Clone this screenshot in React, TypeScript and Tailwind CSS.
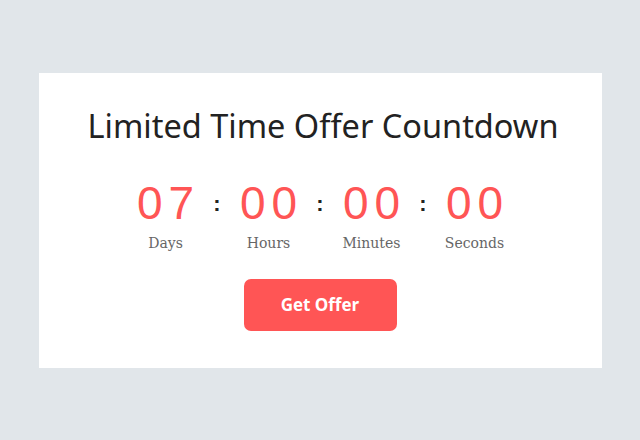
const units = [
  { value: "07", label: "Days" },
  { value: "00", label: "Hours" },
  { value: "00", label: "Minutes" },
  { value: "00", label: "Seconds" },
];

const TimeUnit: React.FC<{ value: string; label: string }> = ({ value, label }) => (
  <div className="flex w-[80px] flex-col items-center">
    {/* trailing letter spacing is offset with a matching left pad */}
    <span className="pl-[6px] font-['Liberation_Sans',sans-serif] text-[46px] leading-none tracking-[6px] text-[#ff5555]">
      {value}
    </span>
    <span className="mt-[7px] font-['DejaVu_Serif',serif] text-[14px] leading-5 text-[#666]">{label}</span>
  </div>
);

export default function App() {
  return (
    <div className="flex h-[440px] w-[640px] items-center justify-center bg-[#e1e6ea]">
      <div className="flex h-[295px] w-[563px] flex-col items-center bg-white pt-[33px]">
        <h1 className="pl-[6px] font-['Noto_Sans',sans-serif] text-[32.5px] leading-10 text-[#222]">
          Limited Time Offer Countdown
        </h1>
        <div className="mt-[34px] flex items-start">
          {units.map((u, i) => (
            <div key={u.label} className="flex items-start">
              {i > 0 && (
                <span className="mt-[13px] w-[23px] text-center font-['Liberation_Sans',sans-serif] text-[22px] font-bold leading-none text-[#222]">
                  :
                </span>
              )}
              <TimeUnit value={u.value} label={u.label} />
            </div>
          ))}
        </div>
        <button className="mt-[26px] h-[52px] w-[153px] rounded-[7px] bg-[#ff5555] font-['Open_Sans',sans-serif] text-[17px] font-bold text-white">
          Get Offer
        </button>
      </div>
    </div>
  );
}
